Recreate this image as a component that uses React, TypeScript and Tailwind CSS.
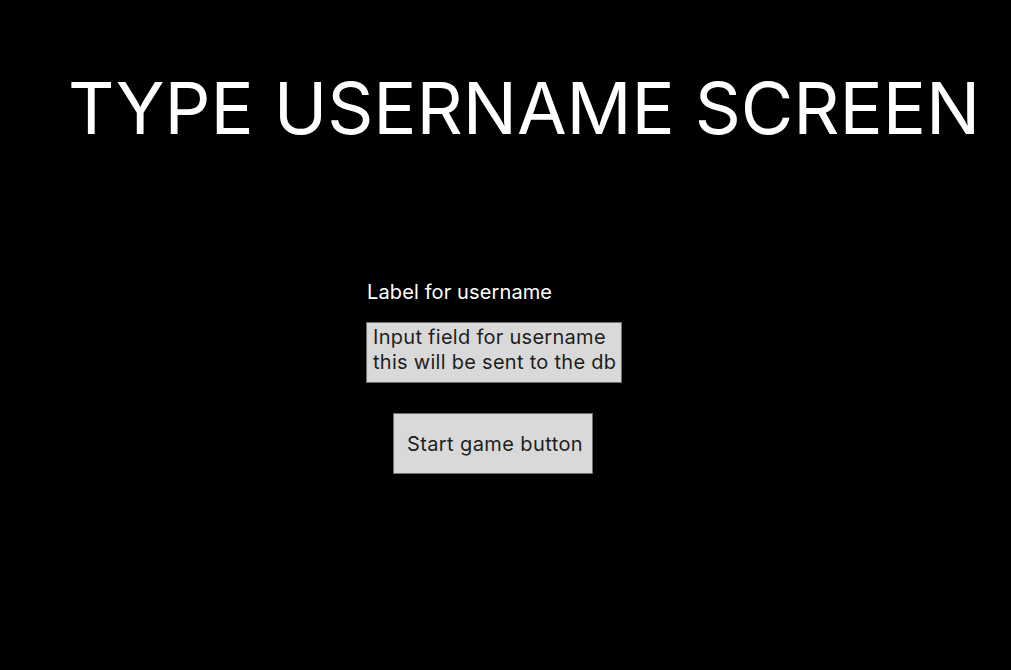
export default function App() {
  return (
    <div className="h-[670px] w-full overflow-hidden bg-black font-['Inter',sans-serif]">
      <h1 className="pl-[68px] pt-[72px] text-[72px] font-normal leading-[72px] tracking-[-0.1px] text-white">
        TYPE USERNAME SCREEN
      </h1>

      <div className="ml-[366px] mt-[136px] flex flex-col items-start">
        <label
          htmlFor="username"
          className="ml-px text-[20px] leading-[24px] tracking-[0.12px] text-white"
        >
          Label for username
        </label>

        <div
          id="username"
          className="mt-[18px] h-[61px] w-[256px] whitespace-nowrap border border-[#6e6e6e] bg-[#d9d9d9] pl-[6px] pt-[2px] text-[20px] leading-[25px] tracking-[0.28px] text-[#1e1e1e]"
        >
          Input field for username
          <br />
          this will be sent to the db
        </div>

        <button
          type="button"
          className="ml-[27px] mt-[30px] flex h-[61px] w-[200px] items-center justify-center whitespace-nowrap border border-[#6e6e6e] bg-[#d9d9d9] pl-[4px] pt-[2px] text-[20px] leading-[25px] tracking-[0.4px] text-[#1e1e1e]"
        >
          Start game button
        </button>
      </div>
    </div>
  );
}
